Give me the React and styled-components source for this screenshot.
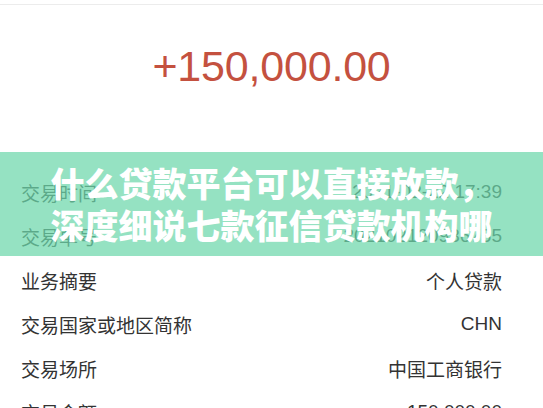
import React from "react";
import styled, { createGlobalStyle } from "styled-components";

const Global = createGlobalStyle`
  html, body { margin: 0; padding: 0; background: #ffffff; }
  body {
    font-family: "Liberation Sans", "Noto Sans CJK SC", sans-serif;
    -webkit-font-smoothing: antialiased;
  }
`;

const Page = styled.div`
  position: relative;
  width: 543px;
  height: 408px;
  overflow: hidden;
  background: #fff;
`;

const TopBar = styled.div`
  height: 4px;
  border-bottom: 1px solid #ececec;
`;

const AmountSection = styled.div`
  height: 165px;
  box-sizing: border-box;
  padding-top: 36px;
  display: flex;
  justify-content: center;
  align-items: flex-start;
`;

const Amount = styled.div`
  font-family: "Liberation Sans", sans-serif;
  font-size: 43px;
  line-height: 50px;
  color: #c4513f;
  letter-spacing: -0.2px;
`;

const List = styled.div`
  display: flex;
  flex-direction: column;
`;

const Row = styled.div`
  height: 44px;
  display: flex;
  align-items: center;
  justify-content: space-between;
  padding: 0 41px 0 21px;
  font-size: 19px;
  color: #333;
`;

const Label = styled.span`
  font-family: "Noto Sans CJK SC", sans-serif;
`;

const Value = styled.span`
  font-family: "Liberation Sans", "Noto Sans CJK SC", sans-serif;
`;

const Banner = styled.div`
  position: absolute;
  left: 0;
  top: 152px;
  width: 543px;
  height: 104px;
  background: rgba(108, 215, 170, 0.72);
  display: flex;
  align-items: center;
  justify-content: center;
`;

const Title = styled.div`
  width: 452px;
  height: 84px;
  overflow: hidden;
  text-align: center;
  color: #fff;
  font-family: "Noto Sans CJK SC", sans-serif;
  font-weight: 900;
  font-size: 34px;
  line-height: 42px;
`;

const rows = [
  ["交易时间", "2021-02-22 17:39"],
  ["交易单号", "202102120936755"],
  ["业务摘要", "个人贷款"],
  ["交易国家或地区简称", "CHN"],
  ["交易场所", "中国工商银行"],
  ["交易金额", "150,000.00"],
];

export default function App() {
  return (
    <Page>
      <Global />
      <TopBar />
      <AmountSection>
        <Amount>+150,000.00</Amount>
      </AmountSection>
      <List>
        {rows.map(([l, v]) => (
          <Row key={l}>
            <Label>{l}</Label>
            <Value>{v}</Value>
          </Row>
        ))}
      </List>
      <Banner>
        <Title>什么贷款平台可以直接放款，深度细说七款征信贷款机构哪个好</Title>
      </Banner>
    </Page>
  );
}
